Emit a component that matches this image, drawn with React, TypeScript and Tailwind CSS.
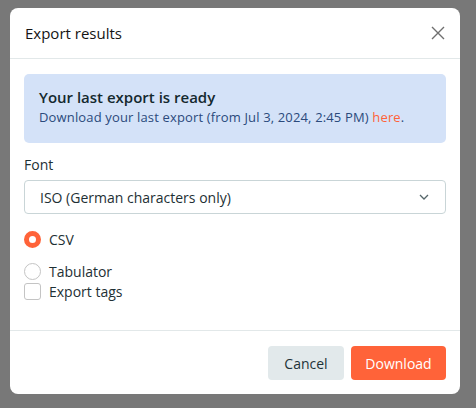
import { useState } from "react";

// export dialog shown over a dimmed page
function App() {
  const [format, setFormat] = useState("csv");
  const [tags, setTags] = useState(false);

  return (
    <div
      className="h-screen w-full bg-[#787878] pt-[8px] pl-[10px]"
      style={{ fontFamily: '"Open Sans", "Liberation Sans", sans-serif' }}
    >
      <div className="w-[450px] rounded-[8px] bg-white text-[#1e3034]">
        {/* header */}
        <div className="flex h-[51px] items-center justify-between border-b border-[#e2e8e9] pl-[15px] pr-[13px]">
          <h2 className="text-[15px] font-medium text-[#141414]">Export results</h2>
          <button className="text-[#6f6f6f]">
            <svg width="18" height="18" viewBox="0 0 18 18" fill="none" stroke="currentColor" strokeWidth="1.4">
              <path d="M3 3L15 15M15 3L3 15" />
            </svg>
          </button>
        </div>

        {/* body */}
        <div className="px-[14px] pt-[15px] pb-[30px]">
          <div className="rounded-[5px] bg-[#d4e2f8] px-[15px] pt-[13px] pb-[16px]">
            <p className="text-[15px] font-semibold leading-[20px] text-[#14292e]">Your last export is ready</p>
            <p className="text-[13px] leading-[20px] tracking-[0.15px] text-[#2b4a7c]">
              Download your last export (from Jul 3, 2024, 2:45 PM){" "}
              <a className="text-[#ff6339]">here</a>.
            </p>
          </div>

          <label className="mt-[12px] block text-[14px] leading-[20px]">Font</label>
          <div className="mt-[5px] flex h-[34px] items-center justify-between rounded-[4px] border border-[#c9d5d7] pl-[15px] pr-[16px] text-[14px]">
            <span>ISO (German characters only)</span>
            <svg width="10" height="6" viewBox="0 0 10 6" fill="none" stroke="#56666a" strokeWidth="1.3">
              <path d="M1 1L5 5L9 1" />
            </svg>
          </div>

          <div
            className="mt-[16px] flex h-[18px] items-center gap-[8px] text-[14px] cursor-pointer"
            onClick={() => setFormat("csv")}
          >
            <span
              className={
                format === "csv"
                  ? "h-[17px] w-[17px] rounded-full border-[5px] border-[#ff6339] bg-white"
                  : "h-[17px] w-[17px] rounded-full border border-[#c4c4c4] bg-white"
              }
            />
            <span>CSV</span>
          </div>
          <div
            className="mt-[14px] flex h-[18px] items-center gap-[8px] text-[14px] cursor-pointer"
            onClick={() => setFormat("tab")}
          >
            <span
              className={
                format === "tab"
                  ? "h-[17px] w-[17px] rounded-full border-[5px] border-[#ff6339] bg-white"
                  : "h-[17px] w-[17px] rounded-full border border-[#c4c4c4] bg-white"
              }
            />
            <span>Tabulator</span>
          </div>
          <div
            className="mt-[2px] flex h-[18px] items-center gap-[8px] text-[14px] cursor-pointer"
            onClick={() => setTags(!tags)}
          >
            <span
              className={
                tags
                  ? "h-[17px] w-[17px] rounded-[3px] border border-[#ff6339] bg-[#ff6339]"
                  : "h-[17px] w-[17px] rounded-[3px] border border-[#c4c4c4] bg-white"
              }
            />
            <span>Export tags</span>
          </div>
        </div>

        {/* footer */}
        <div className="flex justify-end gap-[7px] border-t border-[#e2e8e9] px-[14px] pt-[15px] pb-[14px]">
          <button className="h-[34px] w-[76px] rounded-[4px] bg-[#e2e9eb] text-[14px] font-medium text-[#1e3338]">
            Cancel
          </button>
          <button className="h-[34px] w-[95px] rounded-[4px] bg-[#ff6339] text-[14px] font-medium text-white">
            Download
          </button>
        </div>
      </div>
    </div>
  );
}

export default App;
